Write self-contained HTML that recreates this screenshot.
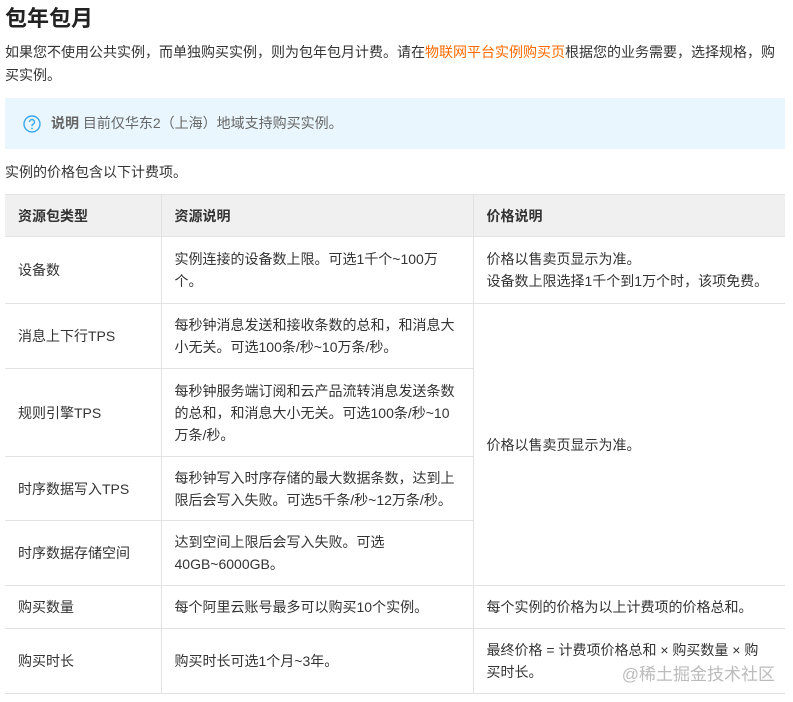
<!DOCTYPE html>
<html><head><meta charset="utf-8"><style>
body{margin:0;background:#fff;font-family:"Liberation Sans","Noto Sans CJK SC",sans-serif;color:#333;font-size:14px;width:793px;height:702px;overflow:hidden;position:relative}
.a{position:absolute}
h1{position:absolute;left:5px;top:1px;margin:0;font-size:22px;font-weight:bold;color:#222}
.p{left:5px;top:41px;width:780px;line-height:23px}
.p a{color:#ff6a00;text-decoration:none}
.note{left:5px;top:98px;width:780px;height:51px;background:#e9f6fd}
.note span{position:absolute;left:46px;top:15px;color:#666}
table{position:absolute;left:5px;top:194px;border-collapse:collapse;width:780px;table-layout:fixed}
td,th{border:1px solid #e2e2e2;padding:0 13px;line-height:22px;text-align:left;vertical-align:middle;color:#333;font-size:14px}
th{background:#f0f0f0;font-weight:bold;height:41px}
td:first-child,th:first-child{border-left:none}
td:last-child,th:last-child{border-right:none}
.wm{right:18px;top:660px;color:#bbb;font-size:17px}
</style></head><body>
<h1>包年包月</h1>
<div class="a p">如果您不使用公共实例，而单独购买实例，则为包年包月计费。请在<a>物联网平台实例购买页</a>根据您的业务需要，选择规格，购买实例。</div>
<div class="a note"><svg class="a" style="left:18px;top:17px" width="18" height="18" viewBox="0 0 18 18"><circle cx="9" cy="9" r="8" fill="none" stroke="#3ba8ef" stroke-width="1.4"/><path d="M6.5 7a2.5 2.5 0 1 1 3.5 2.3c-.7.3-1 .8-1 1.5v.5" fill="none" stroke="#3ba8ef" stroke-width="1.4"/><circle cx="9" cy="13.5" r=".9" fill="#3ba8ef"/></svg><span><b style="color:#666">说明</b> 目前仅华东2（上海）地域支持购买实例。</span></div>
<div class="a" style="left:5px;top:162px">实例的价格包含以下计费项。</div>
<table>
<colgroup><col style="width:156px"><col style="width:312px"><col style="width:312px"></colgroup>
<tr><th>资源包类型</th><th>资源说明</th><th>价格说明</th></tr>
<tr style="height:67px"><td>设备数</td><td>实例连接的设备数上限。可选1千个~100万个。</td><td>价格以售卖页显示为准。<br>设备数上限选择1千个到1万个时，该项免费。</td></tr>
<tr style="height:65px"><td>消息上下行TPS</td><td>每秒钟消息发送和接收条数的总和，和消息大小无关。可选100条/秒~10万条/秒。</td><td rowspan="4">价格以售卖页显示为准。</td></tr>
<tr style="height:88px"><td>规则引擎TPS</td><td>每秒钟服务端订阅和云产品流转消息发送条数的总和，和消息大小无关。可选100条/秒~10万条/秒。</td></tr>
<tr style="height:64px"><td>时序数据写入TPS</td><td>每秒钟写入时序存储的最大数据条数，达到上限后会写入失败。可选5千条/秒~12万条/秒。</td></tr>
<tr style="height:65px"><td>时序数据存储空间</td><td>达到空间上限后会写入失败。可选<br>40GB~6000GB。</td></tr>
<tr style="height:43px"><td>购买数量</td><td>每个阿里云账号最多可以购买10个实例。</td><td>每个实例的价格为以上计费项的价格总和。</td></tr>
<tr style="height:65px"><td>购买时长</td><td>购买时长可选1个月~3年。</td><td>最终价格 = 计费项价格总和 × 购买数量 × 购买时长。</td></tr>
</table>
<div class="a wm">@稀土掘金技术社区</div>
</body></html>
